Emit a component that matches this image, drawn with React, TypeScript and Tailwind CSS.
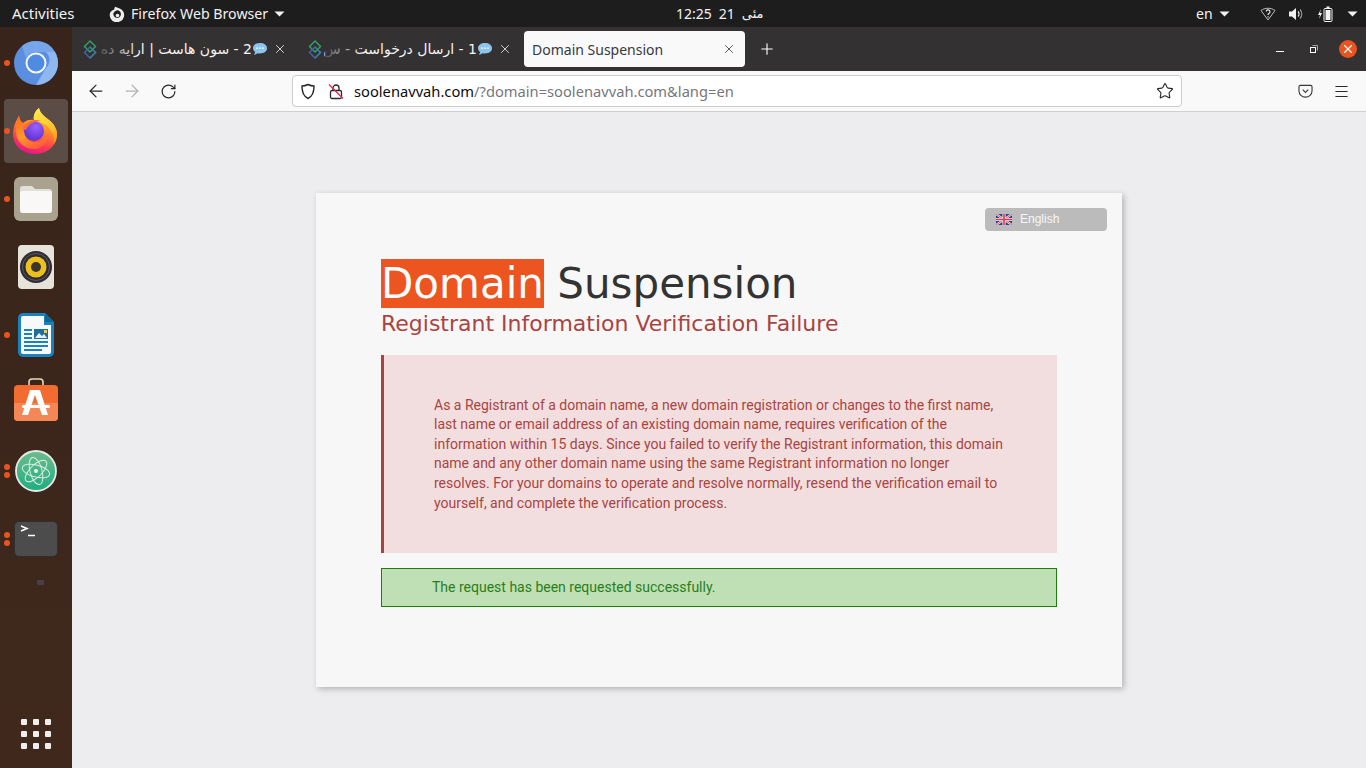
import { ArrowLeft, ArrowRight, Menu, Plus, RotateCw, Star, X } from 'lucide-react'

const uiFont = "font-['Noto_Sans','Open_Sans',sans-serif]"

const Caret = ({ className = '' }: { className?: string }) => (
  <svg width="11" height="6" viewBox="0 0 11 6" className={className}>
    <path d="M0.5 0.5h10L5.5 5.5z" fill="#f2f2f2" />
  </svg>
)

const FireLogo = () => (
  <svg width="46" height="46" viewBox="0 0 46 46">
    <defs>
      <linearGradient id="ffBody" x1="0.7" y1="0" x2="0.35" y2="1">
        <stop offset="0" stopColor="#ffd53a" />
        <stop offset="0.4" stopColor="#ff9326" />
        <stop offset="0.75" stopColor="#ff3a55" />
        <stop offset="1" stopColor="#e31587" />
      </linearGradient>
      <linearGradient id="ffFlame" x1="0.4" y1="0" x2="0.7" y2="1">
        <stop offset="0" stopColor="#ffe94a" />
        <stop offset="0.6" stopColor="#ffc22e" />
        <stop offset="1" stopColor="#ff8a24" />
      </linearGradient>
      <linearGradient id="ffSwoosh" x1="0.2" y1="0" x2="0.6" y2="1">
        <stop offset="0" stopColor="#ff6a1f" />
        <stop offset="0.55" stopColor="#ff9a2a" />
        <stop offset="1" stopColor="#ff5a3c" />
      </linearGradient>
      <radialGradient id="ffGlobe" cx="0.6" cy="0.3" r="0.8">
        <stop offset="0" stopColor="#9a62ff" />
        <stop offset="0.6" stopColor="#7040e0" />
        <stop offset="1" stopColor="#5a2fc0" />
      </radialGradient>
    </defs>
    <path d="M26 0C27 5 31 8 36 12C41 16 44 21 44 26C44 37 35 46 22 46C9 46 0 37 0 26C0 20 2 14 6 8C7 12 8 14 10 15C13 12 18 11 21 12C20 8 22 3 26 0Z" fill="url(#ffBody)" />
    <circle cx="21" cy="23" r="10" fill="url(#ffGlobe)" />
    <path d="M26 0C27 5 31 8 36 12C41 16 44 21 44 26C44 30 43 33 41 36C42 28 38 20 31 16C27 14 23 13 21 12C20 8 22 3 26 0Z" fill="url(#ffFlame)" />
    <path d="M10 21C12 14 20 10 28 13C22 13 16 15 13 22Z" fill="#ff6a3a" />
    <path d="M6 8C7 12 8 14 10 15C8 18 9 21 11 24C12 31 18 35 24 34C30 33 34 28 35 23C37 33 30 41 21 41C11 41 4 34 3 25C2 18 4 12 6 8Z" fill="url(#ffSwoosh)" />
  </svg>
)

const Favicon = () => (
  <svg width="14" height="19" viewBox="0 0 14 19" className="shrink-0">
    <path d="M7 1l5.500 5.500L7 12 1.500 6.500z" fill="none" stroke="#2fa866" strokeWidth="1.400" />
    <path d="M7 7l5.500 5.500L7 18l-5.500-5.500z" fill="none" stroke="#4a64a8" strokeWidth="1.400" />
    <path d="M7 7l5.500 5.500L7 18" fill="none" stroke="#3f7f9c" strokeWidth="1.400" />
  </svg>
)

const Bubble = () => (
  <svg width="16" height="14" viewBox="0 0 16 14" className="inline-block align-[-2px]">
    <path d="M8 1c4 0 7 2 7 5.200S12 11.400 8 11.400c-.8 0-1.500-.1-2.200-.2L2 13l1.200-3C1.800 9 1 7.700 1 6.200 1 3 4 1 8 1z" fill="#8cc4ee" />
    <circle cx="5" cy="6.200" r="0.900" fill="#f4f9fd" />
    <circle cx="8" cy="6.200" r="0.900" fill="#f4f9fd" />
    <circle cx="11" cy="6.200" r="0.900" fill="#f4f9fd" />
  </svg>
)

const InactiveTab = ({ title, className }: { title: string; className: string }) => (
  <div className={`flex h-[36px] items-center pl-[11px] ${className}`}>
    <Favicon />
    <div dir="rtl" className="relative ml-[3px] h-[22px] w-[168px] whitespace-nowrap font-['DejaVu_Sans',sans-serif] text-[14px] leading-[22px] text-[#f4f4f4]">
      <Bubble />
      {title}
      <div className="absolute inset-y-0 left-0 w-[38px] bg-gradient-to-r from-[#333132]/85 to-transparent" />
    </div>
    <X size={14} strokeWidth={1.5} className="ml-[5px] text-[#e8e8e8]" />
  </div>
)

const DockDot = ({ top }: { top: number }) => (
  <span className="absolute left-[4px] h-[6px] w-[6px] rounded-full bg-[#e95420]" style={{ top }} />
)

const DockItem = ({ dots = [], active, children }: { dots?: number[]; active?: boolean; children: React.ReactNode }) => (
  <div className="relative mb-[4px] flex h-[64px] w-full items-center justify-center">
    {active && <div className="absolute inset-y-0 left-[4px] right-[4px] rounded-[4px] bg-[#5b4c45]" />}
    {dots.map((d) => (
      <DockDot key={d} top={d} />
    ))}
    <div className="relative flex">{children}</div>
  </div>
)

const Dock = () => (
  <aside className="flex w-[72px] shrink-0 flex-col items-center bg-gradient-to-b from-[#38241a] to-[#40281c] pt-[4px]">
    <DockItem dots={[29]}>
      <svg width="44" height="44" viewBox="0 0 44 44">
        <circle cx="22" cy="22" r="22" fill="#5a8fe0" />
        <path d="M22 0a22 22 0 0 1 19 11H22a11 11 0 0 0-10 6L8 5a22 22 0 0 1 14-5z" fill="#77a5ea" />
        <path d="M41 11a22 22 0 0 1-19 33l10-17a11 11 0 0 0 0-16z" fill="#8fb7f0" />
        <circle cx="22" cy="22" r="9.500" fill="#4f8be0" stroke="#f3f7fd" strokeWidth="2" />
      </svg>
    </DockItem>
    <DockItem active dots={[29]}>
      <FireLogo />
    </DockItem>
    <DockItem dots={[29]}>
      <div className="flex h-[44px] w-[44px] items-center justify-center rounded-[6px] bg-[#a9a28f]">
        <svg width="32" height="28" viewBox="0 0 32 28">
          <path d="M0 4a3 3 0 0 1 3-3h9l3 3h14a3 3 0 0 1 3 3v18a3 3 0 0 1-3 3H3a3 3 0 0 1-3-3z" fill="#e2dfd8" />
          <path d="M0 8a2 2 0 0 1 2-2h28a2 2 0 0 1 2 2v17a3 3 0 0 1-3 3H3a3 3 0 0 1-3-3z" fill="#f9f8f6" />
        </svg>
      </div>
    </DockItem>
    <DockItem>
      <div className="flex h-[44px] w-[36px] items-center justify-center rounded-[4px] bg-[#e6e3da]">
        <svg width="32" height="32" viewBox="0 0 32 32">
          <circle cx="16" cy="16" r="16" fill="#2f2d33" />
          <circle cx="16" cy="16" r="13.500" fill="none" stroke="#5d5a63" strokeWidth="1" />
          <circle cx="16" cy="16" r="10.500" fill="#ecc01e" />
          <circle cx="16" cy="16" r="5" fill="#3b3527" />
        </svg>
      </div>
    </DockItem>
    <DockItem dots={[29]}>
      <svg width="36" height="44" viewBox="0 0 36 44">
        <path d="M5 0h22l9 9v30a5 5 0 0 1-5 5H5a5 5 0 0 1-5-5V5a5 5 0 0 1 5-5z" fill="#1a83bd" />
        <path d="M5 3h21v9h7v27a2 2 0 0 1-2 2H5a2 2 0 0 1-2-2V5a2 2 0 0 1 2-2z" fill="#f7f9fb" />
        <path d="M27 0l9 9h-9z" fill="#0f6797" />
        <path d="M6 16h8v2H6zm0 4h8v2H6zm0 4h8v2H6zm0 4h24v2H6zm0 4h24v2H6zm0 4h18v2H6z" fill="#1a83bd" />
        <rect x="16" y="16" width="14" height="10" fill="#1a6f9f" />
        <path d="M17 25l4-5 3 3 2-2 3 4z" fill="#e8eef2" />
        <rect x="26" y="17" width="3" height="3" fill="#f2c94c" />
      </svg>
    </DockItem>
    <DockItem>
      <svg width="44" height="50" viewBox="0 0 44 50">
        <path d="M15 8V4a3 3 0 0 1 3-3h8a3 3 0 0 1 3 3v4" fill="none" stroke="#e9d9b8" strokeWidth="1.600" />
        <rect y="7" width="44" height="36" rx="4" fill="#f26b30" />
        <path d="M0 25h44v14a4 4 0 0 1-4 4H4a4 4 0 0 1-4-4z" fill="#f58757" />
        <path d="M16 12h10l8 25h-6l-7-20-7 20h-6z" fill="#fff" />
        <rect x="8" y="27" width="28" height="3" rx="1.500" fill="#fff" />
      </svg>
    </DockItem>
    <DockItem dots={[25, 33]}>
      <svg width="42" height="42" viewBox="0 0 42 42">
        <defs>
          <linearGradient id="atomBg" x1="0" y1="0" x2="0" y2="1">
            <stop offset="0" stopColor="#6fbb8c" />
            <stop offset="1" stopColor="#1fad82" />
          </linearGradient>
        </defs>
        <circle cx="21" cy="21" r="20" fill="url(#atomBg)" stroke="#e6ebe7" strokeWidth="1.800" />
        <g fill="none" stroke="#d8efe2" strokeWidth="1">
          <ellipse cx="21" cy="21" rx="14" ry="6" transform="rotate(15 21 21)" />
          <ellipse cx="21" cy="21" rx="14" ry="6" transform="rotate(75 21 21)" />
          <ellipse cx="21" cy="21" rx="14" ry="6" transform="rotate(135 21 21)" />
        </g>
        <circle cx="21" cy="21" r="2" fill="#e6f5ec" />
      </svg>
    </DockItem>
    <DockItem dots={[25, 33]}>
      <div className="h-[36px] w-[44px] rounded-[5px] border border-[#2f2f2f] bg-[#4c4c4c] pl-[5px] pt-[3px]">
        <svg width="16" height="12" viewBox="0 0 16 12">
          <path d="M1 1l6 2.500-6 2.500" fill="none" stroke="#ffffff" strokeWidth="1.500" />
          <path d="M8 10.500h7" stroke="#ffffff" strokeWidth="1.500" />
        </svg>
      </div>
    </DockItem>
    <div className="ml-[9px] mt-[5px] h-[5px] w-[7px] rounded-[1px] bg-[#4a3f44]" />
    <div className="mb-[19px] mt-auto grid grid-cols-3 gap-[6px]">
      {Array.from({ length: 9 }).map((_, i) => (
        <span key={i} className="h-[6px] w-[6px] rounded-[1px] bg-[#f1efee]" />
      ))}
    </div>
  </aside>
)

const TopBar = () => (
  <header className={`flex h-[27px] shrink-0 items-center bg-[#1d1d1d] text-[14px] text-[#f2f2f2] ${uiFont}`}>
    <span className="ml-[12px] w-[97px] text-[15px]">Activities</span>
    <svg width="16" height="16" viewBox="0 0 16 16">
      <path d="M6 .800l3.500 1.200A7.200 7.200 0 1 1 1.200 6.500L3 4.500 5 3.800z" fill="#ededed" />
      <path d="M4.500 7a3.800 3.800 0 1 0 3.600-2.700L6 5.200z" fill="#1d1d1d" />
      <circle cx="8.500" cy="9.500" r="1.800" fill="#ededed" />
    </svg>
    <span className="ml-[6px] w-[138px] whitespace-nowrap text-[14.2px]">Firefox Web Browser</span>
    <Caret className="ml-[5px]" />
    <div className="ml-[391px] flex w-[86px] items-center">
      <span>12:25</span>
      <span className="ml-[7px]">21</span>
      <span dir="rtl" className="ml-[7px] font-['DejaVu_Sans',sans-serif] text-[13px]">مئی</span>
    </div>
    <span className="ml-[434px]">en</span>
    <Caret className="ml-[6px]" />
    <svg width="16" height="14" viewBox="0 0 16 14" className="ml-[30px]">
      <path d="M1 3.500C5 .500 11 .500 15 3.500L8 13z" fill="none" stroke="#bdbdbd" strokeWidth="1" />
      <path d="M6.200 4.500a1.900 1.900 0 1 1 2.600 2c-.6.3-.8.700-.8 1.500M8 9.200v1.200" fill="none" stroke="#eeeeee" strokeWidth="1.100" />
    </svg>
    <svg width="16" height="14" viewBox="0 0 16 14" className="ml-[12px]">
      <path d="M1 4.500h3L8 1v12L4 9.500H1z" fill="#f2f2f2" />
      <path d="M10 4.500a3.500 3.500 0 0 1 0 5" fill="none" stroke="#f2f2f2" strokeWidth="1.100" />
      <path d="M12 2.500a6.500 6.500 0 0 1 0 9" fill="none" stroke="#9a9a9a" strokeWidth="1.100" />
    </svg>
    <svg width="16" height="16" viewBox="0 0 16 16" className="ml-[13px]">
      <path d="M4 3L1 9h2l-1 4 3-6H3z" fill="#f2f2f2" />
      <rect x="7" y="2.500" width="8" height="13" rx="1" fill="none" stroke="#f2f2f2" />
      <rect x="8.500" y="4" width="5" height="10" fill="#f2f2f2" />
      <rect x="9.500" y="0.500" width="3" height="2" fill="#f2f2f2" />
    </svg>
    <Caret className="ml-[14px]" />
  </header>
)

const TabBar = () => (
  <div className={`flex h-[44px] shrink-0 items-center bg-[#333132] ${uiFont}`}>
    <InactiveTab title="2 - سون هاست | ارایه ده" className="w-[225px]" />
    <InactiveTab title="1 - ارسال درخواست - س" className="w-[227px]" />
    <div className="flex h-[36px] w-[221px] items-center justify-between rounded-[4px] bg-[#f9f9fa] pl-[8px] pr-[9px] text-[14px] text-[#38383d]">
      <span>Domain Suspension</span>
      <X size={14} strokeWidth={1.5} className="text-[#45454a]" />
    </div>
    <Plus size={18} strokeWidth={1.5} className="ml-[13px] text-white" />
    <div className="ml-auto flex items-center pr-[9px]">
      <span className="mb-[-4px] h-[1px] w-[8px] bg-white" />
      <svg width="8" height="8" viewBox="0 0 8 8" className="mb-[1px] ml-[26px]">
        <rect x="0.500" y="2.500" width="5" height="5" fill="none" stroke="#fff" />
        <path d="M2.500 .500h5v5" fill="none" stroke="#a8a8a8" />
      </svg>
      <span className="ml-[21px] flex h-[18px] w-[18px] items-center justify-center rounded-full bg-[#e95420]">
        <X size={14} strokeWidth={2} className="text-white" />
      </span>
    </div>
  </div>
)

const NavBar = () => (
  <div className={`flex h-[41px] shrink-0 items-center border-b border-[#cfcfd1] bg-[#f9f9fa] ${uiFont}`}>
    <ArrowLeft size={20} strokeWidth={1.5} className="ml-[14px] text-[#2a2a2e]" />
    <ArrowRight size={20} strokeWidth={1.5} className="ml-[16px] text-[#b1b1b3]" />
    <RotateCw size={17} strokeWidth={1.7} className="ml-[18px] text-[#2a2a2e]" />
    <div className="ml-[115px] flex h-[32px] w-[890px] items-center rounded-[4px] border border-[#cccccc] bg-white pl-[7px] pr-[7px]">
      <svg width="16" height="17" viewBox="0 0 16 17" fill="none" stroke="#2a2a2e" strokeWidth="1.400">
        <path d="M8 1.500c2 1 4 1.500 6 1.500 0 6-1.500 10.500-6 12.500C3.500 13.500 2 9 2 3c2 0 4-.5 6-1.500z" />
      </svg>
      <svg width="16" height="17" viewBox="0 0 16 17" fill="none" className="ml-[12px]">
        <path d="M5 7V5a3 3 0 0 1 6 0v2" stroke="#2a2a2e" strokeWidth="1.300" />
        <rect x="2.500" y="7.500" width="11" height="8" rx="1.500" stroke="#2a2a2e" strokeWidth="1.300" />
        <path d="M1 1.500l14 14" stroke="#e22850" strokeWidth="1.300" />
      </svg>
      <span className="ml-[10px] whitespace-nowrap text-[14.7px] text-[#77777b]">
        <span className="text-[#0c0c0d]">soolenavvah.com</span>/?domain=soolenavvah.com&amp;lang=en
      </span>
      <Star size={18} strokeWidth={1.5} className="ml-auto text-[#2a2a2e]" />
    </div>
    <svg width="15" height="14" viewBox="0 0 16 15" fill="none" stroke="#3a3a3e" strokeWidth="1.200" className="ml-[116px]">
      <path d="M2.500 1.500h11A1.500 1.500 0 0 1 15 3v4.500a7 6.500 0 0 1-14 0V3a1.500 1.500 0 0 1 1.500-1.500z" />
      <path d="M5 6l3 3 3-3" />
    </svg>
    <Menu size={17} strokeWidth={1.5} className="ml-[20px] text-[#2a2a2e]" />
  </div>
)

const LangButton = () => (
  <div className="mr-[-50px] mt-[15px] flex h-[23px] w-[122px] items-center self-end rounded-[4px] bg-[#bbbbbb] pl-[11px] font-['Liberation_Sans',sans-serif] text-[12px] text-[#f7f7f7]">
    <svg width="16" height="11" viewBox="0 0 16 11">
      <rect width="16" height="11" fill="#2b3f8f" />
      <path d="M0 0l16 11M16 0L0 11" stroke="#eee" strokeWidth="2.200" />
      <path d="M0 0l16 11M16 0L0 11" stroke="#d8384a" strokeWidth="0.800" />
      <path d="M8 0v11M0 5.500h16" stroke="#eee" strokeWidth="3.200" />
      <path d="M8 0v11M0 5.500h16" stroke="#d8384a" strokeWidth="1.600" />
    </svg>
    <span className="mb-[2px] ml-[8px]">English</span>
  </div>
)

export default function App() {
  return (
    <div className="flex h-[768px] w-[1366px] flex-col overflow-hidden">
      <TopBar />
      <div className="flex min-h-0 flex-1">
        <Dock />
        <div className="flex min-w-0 flex-1 flex-col">
          <TabBar />
          <NavBar />
          <main className="flex-1 bg-[#ededf0] pt-[81px]">
            <section className="mx-auto flex h-[494px] w-[806px] flex-col bg-[#f7f7f7] px-[65px] shadow-[2px_2px_6px_rgba(0,0,0,0.25)]">
              <LangButton />
              <h1 className="mt-[28px] font-['DejaVu_Sans',sans-serif] text-[42px] leading-[49px] text-[#333333]">
                <span className="bg-[#ec5420] text-white">Domain</span> Suspension
              </h1>
              <h2 className="mt-[2px] font-['DejaVu_Sans',sans-serif] text-[22px] leading-[28px] text-[#a94442]">
                Registrant Information Verification Failure
              </h2>
              <div className="mt-[17px] border-l-[3px] border-[#a94442] bg-[#f2dede] pb-[39.75px] pl-[50px] pr-[50px] pt-[40.65px] font-['Roboto',sans-serif] text-[14px] leading-[19.6px] text-[#a94442]">
                As a Registrant of a domain name, a new domain registration or changes to the first name, last name or email address of an existing domain name, requires verification of the information within 15 days. Since you failed to verify the Registrant information, this domain name and any other domain name using the same Registrant information no longer resolves. For your domains to operate and resolve normally, resend the verification email to yourself, and complete the verification process.
              </div>
              <div className="mt-[15px] flex h-[39px] items-center border border-[#1f7d0c] bg-[#bfe0b5] pl-[50px] font-['Roboto',sans-serif] text-[14px] text-[#2a7d1c]">
                The request has been requested successfully.
              </div>
            </section>
          </main>
        </div>
      </div>
    </div>
  )
}
